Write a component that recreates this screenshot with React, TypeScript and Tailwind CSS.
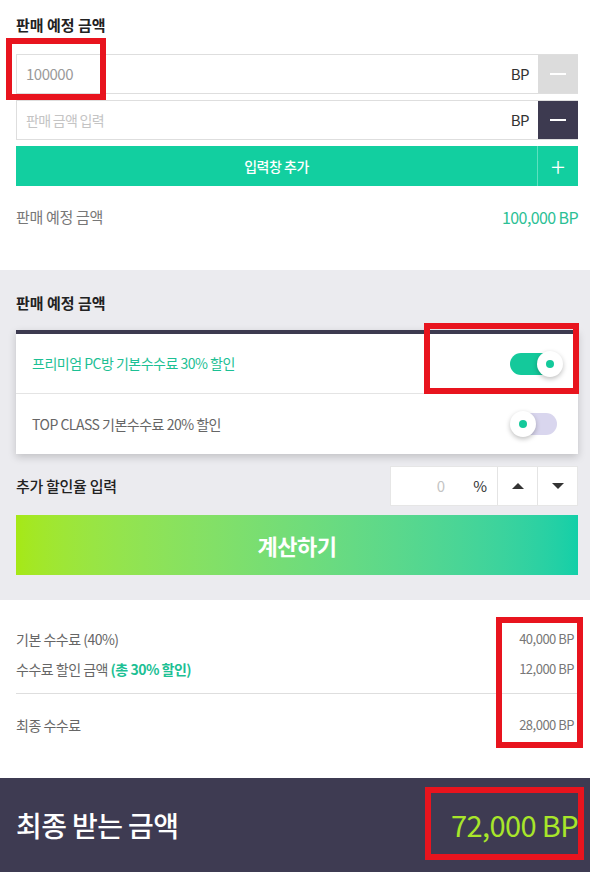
import React from "react";

const F = { fontFamily: '"Noto Sans CJK KR", "Noto Sans", sans-serif' };

function Minus({ dark }: { dark?: boolean }) {
  return (
    <div className={`w-[40px] h-full flex items-center justify-center ${dark ? "bg-[#3d3a50]" : "bg-[#dcdcdc]"}`}>
      <div className="w-[16px] h-[2px] bg-white" />
    </div>
  );
}

function Toggle({ on }: { on: boolean }) {
  return (
    <div className={`relative w-[46px] h-[22px] rounded-full ${on ? "bg-[#14c99b]" : "bg-[#d9d6ee]"}`}>
      <div
        className={`absolute top-[-2px] ${on ? "right-[-7px]" : "left-[-1px]"} w-[26px] h-[26px] rounded-full bg-white shadow-[0_2px_5px_rgba(0,0,0,0.25)] flex items-center justify-center`}
      >
        <div className="w-[8px] h-[8px] rounded-full bg-[#14c99b]" />
      </div>
    </div>
  );
}

export default function App() {
  return (
    <div className="relative w-[590px] h-[872px] overflow-hidden bg-white text-[#333]" style={F}>
      {/* top section */}
      <div className="h-[270px] pl-[16px] pr-[12px] pt-[13px]">
        <div className="text-[15px] font-bold text-[#222] leading-[24px]">판매 예정 금액</div>
        <div className="mt-[17px] h-[40px] flex border border-[#dedede] border-r-0">
          <div className="flex-1 flex items-center justify-between pl-[9px] pr-[9px]">
            <span className="text-[15px] text-[#9a9a9a] tracking-[-0.5px]">100000</span>
            <span className="text-[15px] text-[#333] tracking-[-0.5px]">BP</span>
          </div>
          <Minus />
        </div>
        <div className="mt-[6px] h-[40px] flex border border-[#dedede] border-r-0">
          <div className="flex-1 flex items-center justify-between pl-[9px] pr-[9px]">
            <span className="text-[14px] text-[#c4c4c4] tracking-[-0.7px]">판매 금액 입력</span>
            <span className="text-[15px] text-[#333] tracking-[-0.5px]">BP</span>
          </div>
          <Minus dark />
        </div>
        <div className="mt-[6px] h-[40px] flex bg-[#12cfa0]">
          <div className="flex-1 flex items-center justify-center text-white text-[14px] font-medium tracking-[-0.5px]">
            입력창 추가
          </div>
          <div className="w-[41px] h-full border-l border-[#5ee0bf] flex items-center justify-center text-white text-[26px] font-light leading-none">
            +
          </div>
        </div>
        <div className="mt-[19px] flex justify-between items-center leading-[24px]">
          <span className="text-[15px] text-[#777] tracking-[-0.3px]">판매 예정 금액</span>
          <span className="text-[16px] text-[#2cbf95] tracking-[-0.6px]">100,000 BP</span>
        </div>
      </div>

      {/* gray section */}
      <div className="h-[330px] bg-[#ebebef] pl-[16px] pr-[12px] pt-[21px]">
        <div className="text-[15px] font-bold text-[#222] leading-[24px]">판매 예정 금액</div>
        <div className="mt-[15px] bg-white border-t-[4px] border-[#3d3a50] shadow-[0_3px_8px_rgba(0,0,0,0.18)]">
          <div className="h-[60px] flex items-center justify-between pl-[16px] pr-[22px] border-b border-[#e4e4e4]">
            <span className="text-[14px] text-[#1cc094] tracking-[-0.5px]">프리미엄 PC방 기본수수료 30% 할인</span>
            <Toggle on />
          </div>
          <div className="h-[60px] flex items-center justify-between pl-[16px] pr-[21px]">
            <span className="text-[14px] text-[#666] tracking-[-0.5px]">TOP CLASS 기본수수료 20% 할인</span>
            <Toggle on={false} />
          </div>
        </div>
        <div className="mt-[12px] flex items-center justify-between">
          <span className="text-[15px] font-medium text-[#222] tracking-[-0.3px]">추가 할인율 입력</span>
          <div className="w-[188px] h-[40px] bg-white flex border border-[#e6e6e6]">
            <div className="flex-1 flex items-center justify-end text-[15px]">
              <span className="text-[#c4c4c4] mr-[28px]">0</span>
              <span className="text-[#333] mr-[10px]">%</span>
            </div>
            <div className="w-[40px] border-l border-[#e4e4e4] flex items-center justify-center">
              <div className="w-0 h-0 border-l-[6px] border-r-[6px] border-b-[6px] border-l-transparent border-r-transparent border-b-[#333]" />
            </div>
            <div className="w-[40px] border-l border-[#e4e4e4] flex items-center justify-center">
              <div className="w-0 h-0 border-l-[6px] border-r-[6px] border-t-[6px] border-l-transparent border-r-transparent border-t-[#333]" />
            </div>
          </div>
        </div>
        <div className="mt-[9px] h-[60px] bg-gradient-to-r from-[#a6e815] to-[#12cfa8] flex items-center justify-center text-white text-[22px] font-bold tracking-[-0.5px]">
          계산하기
        </div>
      </div>

      {/* results */}
      <div className="h-[178px] bg-white pl-[16px] pr-[12px] pt-[27px]">
        <div className="flex justify-between items-center leading-[24px]">
          <span className="text-[14px] text-[#666] tracking-[-0.5px]">기본 수수료 (40%)</span>
          <span className="text-[13px] text-[#777] tracking-[-0.5px] mr-[4px]">40,000 BP</span>
        </div>
        <div className="mt-[6px] flex justify-between items-center leading-[24px]">
          <span className="text-[14px] text-[#666] tracking-[-0.5px]">
            수수료 할인 금액 <span className="text-[#1cc094] font-bold">(총 30% 할인)</span>
          </span>
          <span className="text-[13px] text-[#777] tracking-[-0.5px] mr-[4px]">12,000 BP</span>
        </div>
        <div className="mt-[12px] h-px bg-[#dedede]" />
        <div className="mt-[19px] flex justify-between items-center leading-[24px]">
          <span className="text-[14px] text-[#666] tracking-[-0.5px]">최종 수수료</span>
          <span className="text-[13px] text-[#777] tracking-[-0.5px] mr-[4px]">28,000 BP</span>
        </div>
      </div>

      {/* bottom bar */}
      <div className="h-[94px] bg-[#3e3b52] pl-[16px] pr-[12px] flex items-center justify-between">
        <span className="text-white text-[28px] font-medium tracking-[-0.6px]">최종 받는 금액</span>
        <span className="text-[#a8e62a] text-[29px] tracking-[-0.6px]">72,000 BP</span>
      </div>

      {/* red annotation boxes */}
      <div className="absolute left-[6px] top-[38px] w-[100px] h-[62px] border-[6px] border-[#e8141e]" />
      <div className="absolute left-[424px] top-[323px] w-[155px] h-[71px] border-[6px] border-[#e8141e]" />
      <div className="absolute left-[496px] top-[617px] w-[87px] h-[131px] border-[6px] border-[#e8141e]" />
      <div className="absolute left-[425px] top-[787px] w-[159px] h-[73px] border-[6px] border-[#e8141e]" />
    </div>
  );
}
